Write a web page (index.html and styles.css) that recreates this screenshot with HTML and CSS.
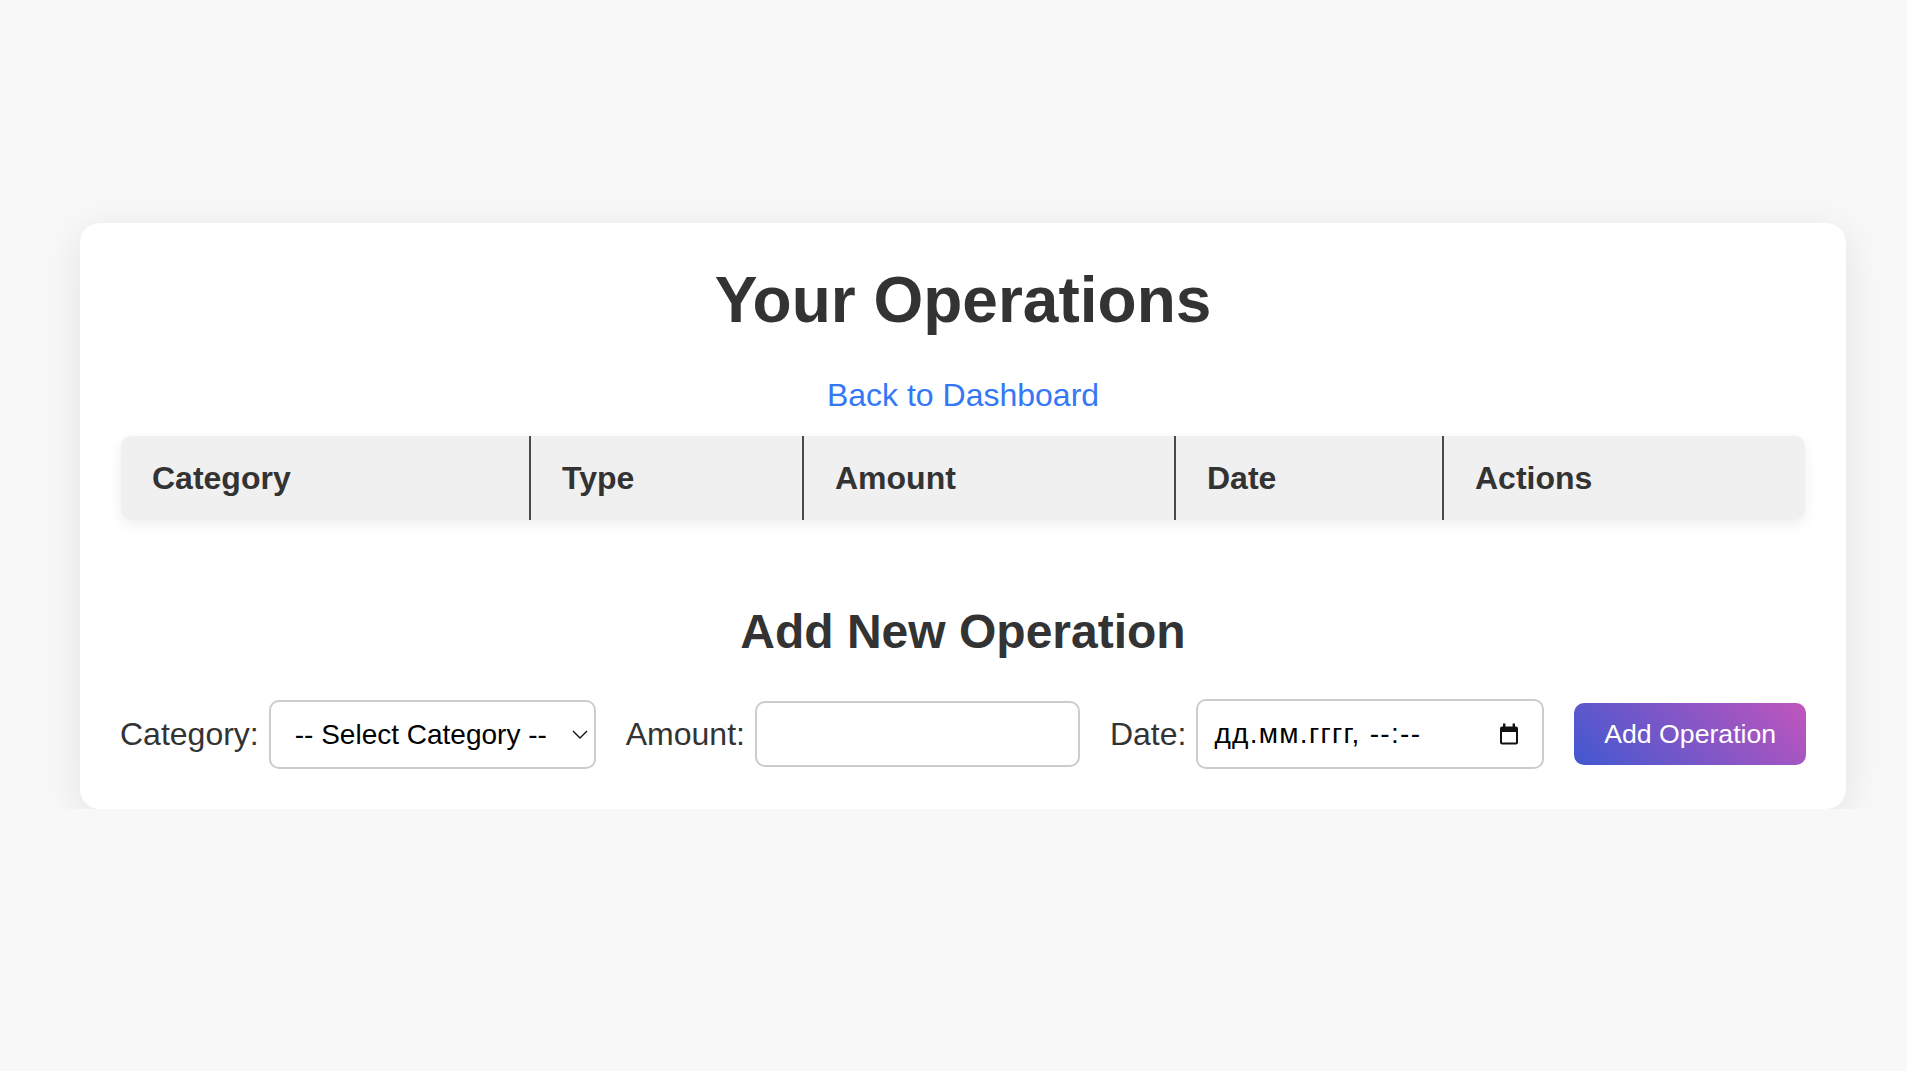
FILE: index.html
```html
<!DOCTYPE html>
<html lang="en">
<head>
<meta charset="utf-8">
<title>Your Operations</title>
<link rel="stylesheet" href="styles.css">
</head>
<body>
<main class="page">
  <section class="card">
    <h1 class="title">Your Operations</h1>
    <div class="back"><a class="back-link" href="#">Back to Dashboard</a></div>
    <table class="ops">
      <colgroup>
        <col class="c1"><col class="c2"><col class="c3"><col class="c4"><col class="c5">
      </colgroup>
      <thead>
        <tr><th>Category</th><th>Type</th><th>Amount</th><th>Date</th><th>Actions</th></tr>
      </thead>
      <tbody></tbody>
    </table>
    <h2 class="subtitle">Add New Operation</h2>
    <form class="add-form">
      <div class="group">
        <label class="lbl">Category:</label>
        <div class="select-wrap">
          <select class="ctl select"><option>-- Select Category --</option></select>
          <svg class="chev" width="16" height="9" viewBox="0 0 16 9"><path d="M1 1 L8 8 L15 1" fill="none" stroke="#111" stroke-width="1.4"/></svg>
        </div>
      </div>
      <div class="group">
        <label class="lbl">Amount:</label>
        <input class="ctl amount" type="text">
      </div>
      <div class="group">
        <label class="lbl">Date:</label>
        <div class="ctl date">
          <span class="date-text">дд.мм.гггг, --:--</span>
          <svg class="cal" width="22" height="22" viewBox="0 0 22 22"><path d="M5 0.5 h2.4 v3 h7.2 v-3 h2.4 v3 h1 a2 2 0 0 1 2 2 v14 a2 2 0 0 1 -2 2 h-14 a2 2 0 0 1 -2 -2 v-14 a2 2 0 0 1 2 -2 h1 z M4 9 v10.5 h14 v-10.5 z" fill="#111" fill-rule="evenodd"/></svg>
        </div>
      </div>
      <button class="add-btn" type="button">Add Operation</button>
    </form>
  </section>
</main>
</body>
</html>
```
FILE: styles.css
```css
html, body {
  margin: 0;
  padding: 0;
}
body {
  background: #f8f8f8;
  font-family: "Liberation Sans", Arial, Helvetica, sans-serif;
  color: #333;
  font-size: 32px;
}
.page {
  padding: 223px 0 0 80px;
}
.card {
  width: 1686px;
  background: #fff;
  border-radius: 20px;
  padding: 40px;
  box-shadow: 0 8px 40px rgba(0, 0, 0, 0.09);
}
.title {
  margin: 0 0 40px;
  font-size: 64px;
  font-weight: 700;
  text-align: center;
  color: #333;
}
.back {
  text-align: center;
  margin-bottom: 22px;
}
.back-link {
  color: #3478f6;
  text-decoration: none;
  font-size: 32px;
}
.ops {
  width: 1684px;
  margin-left: 1px;
  table-layout: fixed;
  border-collapse: separate;
  border-spacing: 0;
  border-radius: 10px;
  overflow: hidden;
  box-shadow: 0 4px 14px rgba(0, 0, 0, 0.07);
}
.c1 { width: 408px; }
.c2 { width: 273px; }
.c3 { width: 372px; }
.c4 { width: 268px; }
.ops th {
  background: #f0f0f0;
  text-align: left;
  font-weight: 700;
  font-size: 32px;
  color: #333;
  padding: 24px 30px 24px 31px;
  line-height: 36px;
}
.ops th + th {
  border-left: 2px solid #4a4a4a;
}
.subtitle {
  margin: 84px 0 40px;
  font-size: 48px;
  font-weight: 700;
  text-align: center;
  color: #333;
}
.add-form {
  display: flex;
  align-items: center;
  gap: 30px;
}
.group {
  display: flex;
  align-items: center;
  gap: 10px;
}
.lbl {
  font-size: 32px;
  color: #333;
}
.ctl {
  box-sizing: border-box;
  border: 2px solid #ccc;
  border-radius: 10px;
  background: #fff;
  font-family: "Liberation Sans", Arial, Helvetica, sans-serif;
  font-size: 28px;
  color: #000;
  margin: 0;
}
.select-wrap {
  position: relative;
}
.select {
  appearance: none;
  -webkit-appearance: none;
  width: 327px;
  height: 69px;
  padding: 0 0 0 24px;
  outline: none;
}
.chev {
  position: absolute;
  right: 8px;
  top: 30px;
  pointer-events: none;
}
.amount {
  width: 325px;
  height: 66px;
  padding: 0 16px;
}
.date {
  width: 348px;
  height: 70px;
  padding: 0 22px 0 16px;
  display: flex;
  align-items: center;
  justify-content: space-between;
}
.date-text {
  letter-spacing: 1.3px;
}
.cal {
  display: block;
}
.add-btn {
  width: 233px;
  height: 62px;
  border: none;
  border-radius: 10px;
  background: linear-gradient(45deg, #4158d0, #c155bd);
  color: #fff;
  font-family: "Liberation Sans", Arial, Helvetica, sans-serif;
  font-size: 26.67px;
  padding: 0;
  cursor: pointer;
}
```
